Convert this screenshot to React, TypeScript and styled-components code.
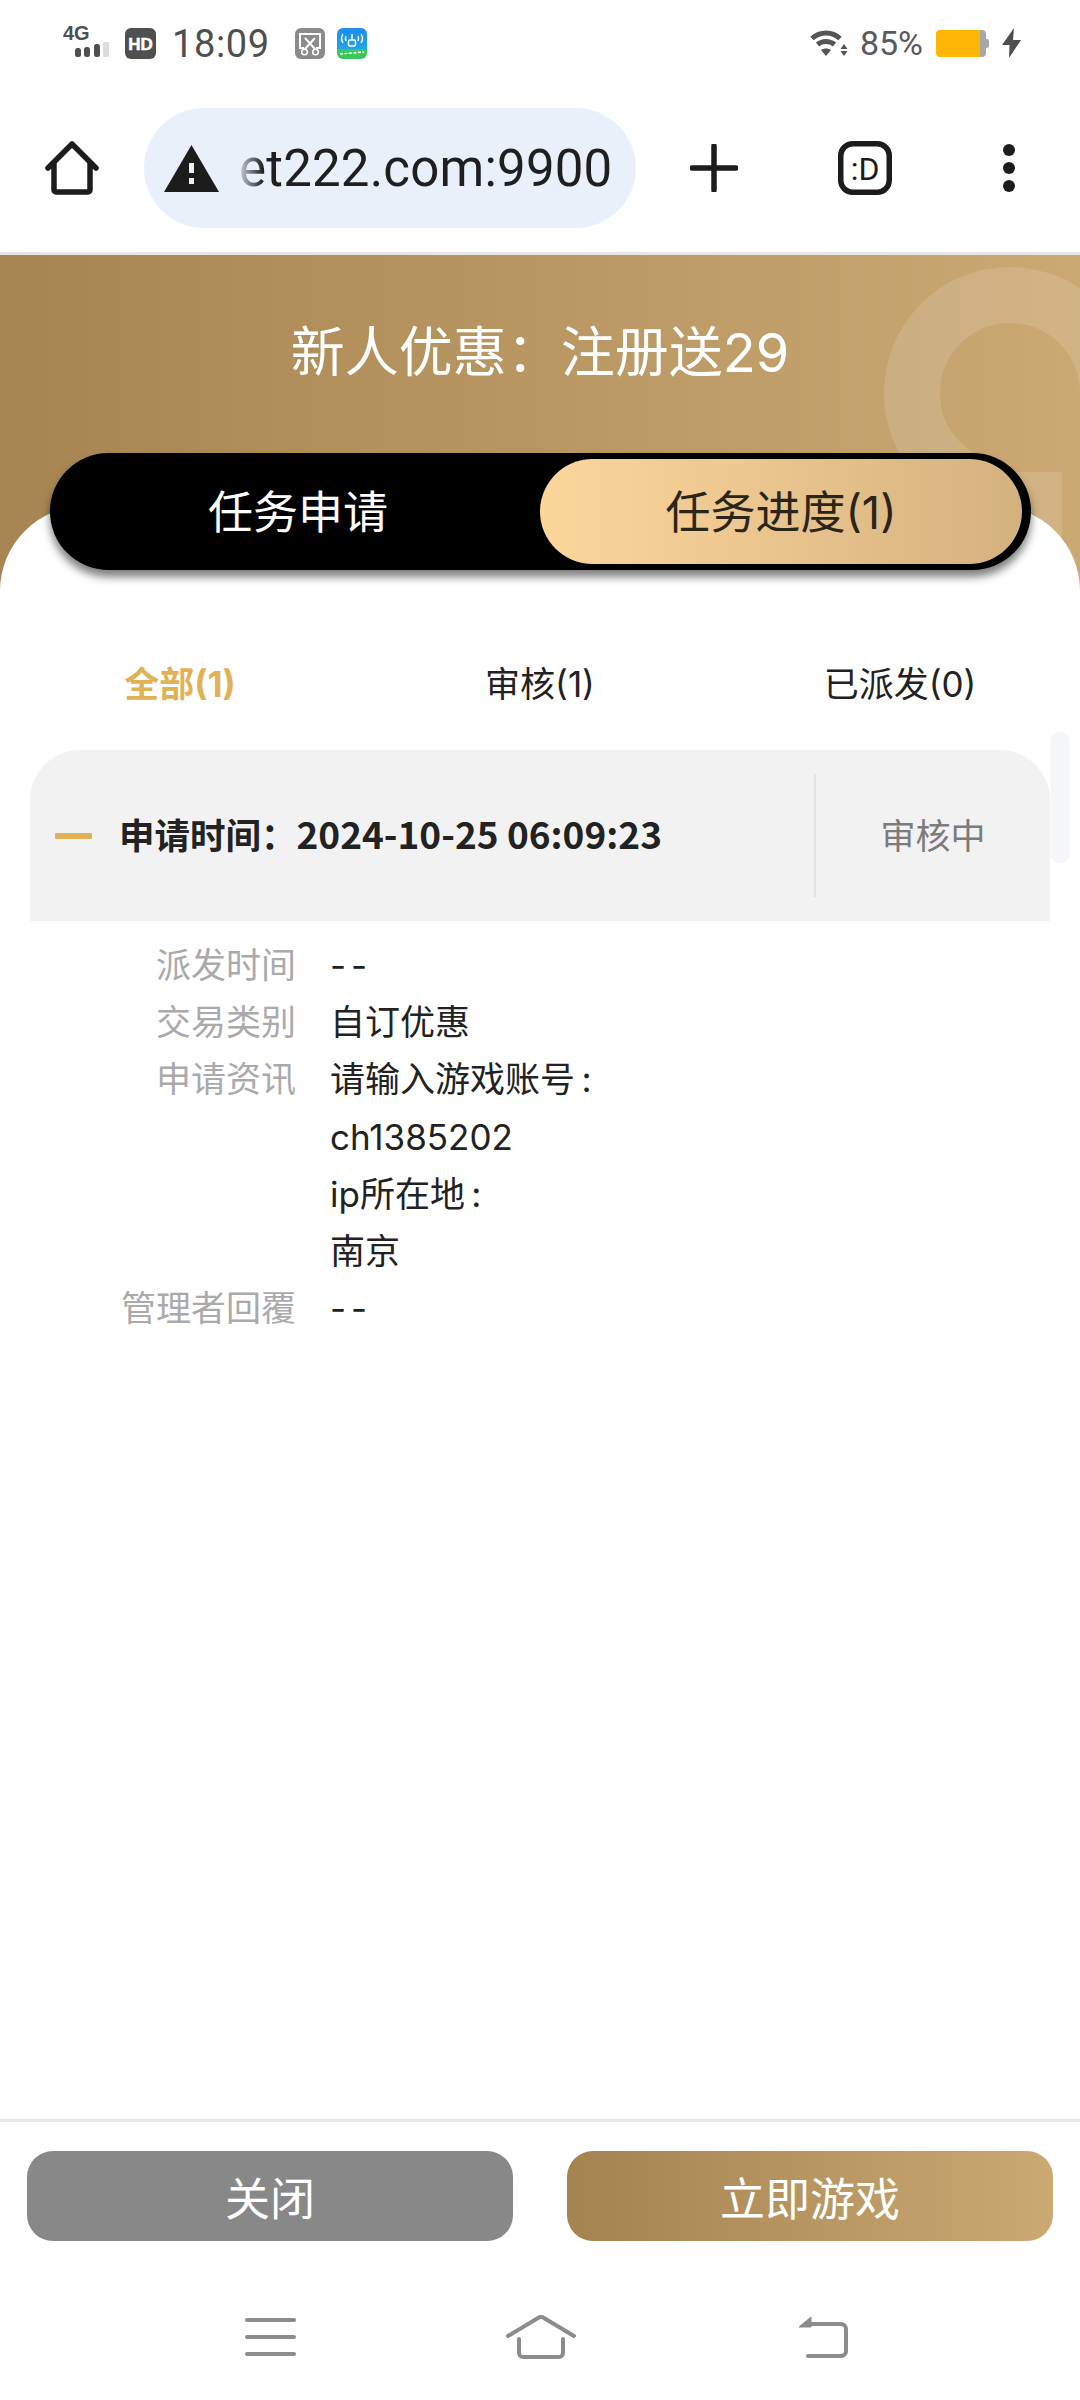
import React from "react";
import styled, { createGlobalStyle } from "styled-components";

const Global = createGlobalStyle`
  html, body { margin: 0; padding: 0; background: #fff; }
  * { box-sizing: border-box; }
  body { font-family: Roboto, "Noto Sans CJK SC", sans-serif; }
`;
const Page = styled.div`
  width: 1080px; height: 2400px; display: flex; flex-direction: column; overflow: hidden; background: #fff;
  font-family: Inter, "Noto Sans CJK SC", Roboto, sans-serif;
`;
const StatusBar = styled.div`
  height: 86px; flex: none; display: flex; align-items: center; justify-content: space-between; padding: 0 59px 0 63px;
  color: #555; font-family: Roboto, sans-serif;
`;
const StatusGroup = styled.div`display: flex; align-items: center;`;
const Time = styled.span`font-size: 38px; letter-spacing: 0.6px; margin: 2px 25px 0 16px; color: #4f4f4f;`;
const Percent = styled.span`font-size: 34px; margin: 0 13px 0 12px; color: #5a5a5a;`;
const Toolbar = styled.div`
  height: 169px; flex: none; display: flex; align-items: center; padding: 0 0 2px 45px; border-bottom: 3px solid #e6e6e6;
`;
const AddressPill = styled.div`
  width: 492px; height: 120px; margin-left: 45px; border-radius: 60px; background: #eaf0fa; display: flex; align-items: center;
  padding-left: 20px; overflow: hidden; flex: none;
`;
const Url = styled.span`
  font-family: Roboto, sans-serif; font-size: 51px; color: #1f1f1f; margin-left: 20px; white-space: nowrap; letter-spacing: 0.2px;
  -webkit-mask-image: linear-gradient(90deg, rgba(0,0,0,.15), #000 24px);
  mask-image: linear-gradient(90deg, rgba(0,0,0,.15), #000 24px);
`;
const ToolIcons = styled.div`display: flex; align-items: center; margin-left: 54px;`;
const Hero = styled.div`
  position: relative; height: 345px; flex: none; overflow: hidden; padding-top: 62px; text-align: center;
  background: linear-gradient(90deg, #a68552, #cba973);
`;
const HeroMark = styled.svg`
  position: absolute; left: 840px; top: 0; opacity: 0.13;
`;
const HeroTitle = styled.h1`
  position: relative; margin: 0; font-size: 54px; line-height: 72px; font-weight: 400; color: #fff;
`;
const Panel = styled.div`
  position: relative; flex: 1; margin-top: -94px; background: #fff; border-radius: 85px 85px 0 0; padding-top: 135px; display: flex; flex-direction: column;
`;
const Switch = styled.div`
  position: absolute; z-index: 2; left: 50px; top: -53px; width: 981px; height: 117px; border-radius: 59px; background: #000;
  box-shadow: 0 7px 8px rgba(0,0,0,.5); display: flex; align-items: center; padding-right: 9px;
`;
const SwitchItem = styled.div<{ $active?: boolean }>`
  height: 105px; border-radius: 53px; display: flex; align-items: center; justify-content: center;
  font-size: 45px; font-weight: 400; padding-bottom: 5px;
  padding-left: ${(p) => (p.$active ? 0 : 6)}px;
  color: ${(p) => (p.$active ? "#2b2418" : "#fff")};
  background: ${(p) => (p.$active ? "linear-gradient(90deg, #fdd69c, #d4b27e)" : "transparent")};
  flex: 0 0 ${(p) => (p.$active ? "482px" : "490px")};
`;
const SubTabs = styled.div`
  height: 80px; display: grid; grid-template-columns: repeat(3, 360px); align-items: center; justify-items: center; font-size: 35px; color: #222;
`;
const SubTab = styled.span<{ $active?: boolean }>`
  font-weight: ${(p) => (p.$active ? 700 : 400)};
  color: ${(p) => (p.$active ? "#e0b255" : "#222")};
`;
const List = styled.div`position: relative; padding: 0 30px; margin-top: 29px;`;
const ScrollThumb = styled.div`
  position: absolute; left: 1052px; top: -17px; width: 16px; height: 129px; border-radius: 8px; background: #f6f7fb; box-shadow: 0 0 3px rgba(0,0,0,.1);
`;
const CardHead = styled.div`
  height: 171px; background: #f2f2f2; border-radius: 50px 50px 0 0; display: flex; align-items: center; padding-left: 25px;
`;
const Dash = styled.span`width: 37px; height: 6px; background: #e0b255; border-radius: 1px; flex: none;`;
const CardTitle = styled.span`
  flex: 1; margin: 0 0 5px 27px; font-size: 35.5px; font-weight: 700; color: #222; white-space: nowrap;
  font-family: "Noto Sans CJK SC", sans-serif;
`;
const CardDate = styled.span`font-size: 37px;`;
const CardState = styled.div`
  width: 236px; height: 123px; border-left: 2px solid #e2e2e2; display: flex; align-items: center; justify-content: center;
  font-size: 35px; color: #7b7b7b; flex: none; padding-bottom: 4px;
`;
const Details = styled.div`
  display: grid; grid-template-columns: 296px 1fr; column-gap: 34px; font-size: 35px; line-height: 57.2px; padding-top: 16px; margin-left: -30px;
`;
const Label = styled.div`text-align: right; color: #aaa;`;
const Value = styled.div`color: #222;`;
const EmptyValue = styled(Value)`letter-spacing: 5px;`;
const Footer = styled.div`
  flex: none; height: 281px; border-top: 3px solid #e8e8e8; padding-top: 29px; background: #fff;
`;
const ButtonRow = styled.div`display: flex; padding: 0 27px; justify-content: space-between;`;
const Button = styled.div<{ $gold?: boolean }>`
  width: 486px; height: 90px; border-radius: 26px; display: flex; align-items: center; justify-content: center; color: #fff; font-size: 45px;
  background: ${(p) => (p.$gold ? "linear-gradient(90deg, #a38350, #cba973)" : "#888")};
`;
const NavBar = styled.div`
  display: flex; align-items: center; margin-top: 74px; padding-left: 245px;
`;

const Glyph = styled.svg<{ $mr?: number; $ml?: number }>`
  display: block; flex: none;
  margin-right: ${(p) => p.$mr ?? 0}px; margin-left: ${(p) => p.$ml ?? 0}px;
`;

const Signal = () => (
  <Glyph width="48" height="44" viewBox="0 -5 48 44" $mr={14}>
    <text x="0" y="14" fontFamily="Liberation Sans" fontWeight="700" fontSize="20" fill="#4f4f4f">4G</text>
    <rect x="12" y="22" width="6" height="9" rx="2.5" fill="#4f4f4f" />
    <rect x="21" y="21" width="6" height="10" rx="2.5" fill="#4f4f4f" />
    <rect x="31" y="18" width="6" height="13" rx="2.5" fill="#4f4f4f" />
    <rect x="40" y="16" width="6" height="15" rx="1" fill="#ddd" />
  </Glyph>
);
const Hd = () => (
  <Glyph width="31" height="31" viewBox="0 0 31 31">
    <rect width="31" height="31" rx="6" fill="#4f4f4f" />
    <text x="15.5" y="21.500" textAnchor="middle" fontFamily="Liberation Sans" fontWeight="700" fontSize="17" stroke="#fff" strokeWidth="0.5" fill="#fff">HD</text>
  </Glyph>
);
const Scissors = () => (
  <Glyph width="30" height="31" viewBox="0 0 30 31" $mr={12}>
    <rect width="30" height="31" rx="6" fill="#8b8b8b" />
    <path d="M9 20H5V6h20v14h-4" fill="none" stroke="#fff" strokeWidth="2" />
    <path d="M10 10l10 11M20 10L10 21" stroke="#fff" strokeWidth="2" />
    <circle cx="9.500" cy="24" r="2.800" fill="none" stroke="#fff" strokeWidth="1.600" />
    <circle cx="20.500" cy="24" r="2.800" fill="none" stroke="#fff" strokeWidth="1.600" />
  </Glyph>
);
const AppIcon = () => (
  <Glyph width="30" height="31" viewBox="0 0 30 31">
    <defs>
      <linearGradient id="appg" x1="0" y1="0" x2="0" y2="1">
        <stop offset="0" stopColor="#1c8cf0" />
        <stop offset="0.68" stopColor="#23a4e8" />
        <stop offset="0.7" stopColor="#3ecb58" />
        <stop offset="1" stopColor="#37c45c" />
      </linearGradient>
    </defs>
    <rect width="30" height="31" rx="6" fill="url(#appg)" />
    <path d="M6 6c-2 3-2 6 0 9M24 6c2 3 2 6 0 9M9 8c-1 2-1 3 0 5M21 8c1 2 1 3 0 5" fill="none" stroke="#fff" strokeWidth="1.300" />
    <path d="M15 6v6" stroke="#fff" strokeWidth="1.600" />
    <rect x="11.500" y="12" width="7" height="6" rx="1.500" fill="none" stroke="#fff" strokeWidth="1.500" />
    <path d="M3 26l24-2" stroke="#fff" strokeWidth="1.500" strokeDasharray="3 1.500" />
  </Glyph>
);
const Wifi = () => (
  <Glyph width="38" height="28" viewBox="0 0 38 28">
    <path d="M2 9.500C10 2 22 2 30 9.500" fill="none" stroke="#555" strokeWidth="5" />
    <path d="M7.500 15.500C12.500 11.500 19.500 11.500 24.500 15.500" fill="none" stroke="#555" strokeWidth="5" />
    <path d="M11 21c3-2 7-2 10 0l-5 6z" fill="#555" />
    <path d="M34 15l3.500 5h-7zM34 27l-3.500-5h7z" fill="#555" />
  </Glyph>
);
const Battery = () => (
  <Glyph width="53" height="27" viewBox="0 0 53 27" $mr={13}>
    <path d="M44 0h2a4 4 0 0 1 4 4v19a4 4 0 0 1-4 4h-2z" fill="#a8a8a8" />
    <path d="M50 9h1a2 2 0 0 1 2 2v5a2 2 0 0 1-2 2h-1z" fill="#a8a8a8" />
    <path d="M4 0h40v27H4a4 4 0 0 1-4-4V4a4 4 0 0 1 4-4z" fill="#ffb606" />
  </Glyph>
);
const Bolt = () => (
  <Glyph width="19" height="30" viewBox="0 0 19 30">
    <path d="M12 0L0 17h7.500L7 30 19 12h-8z" fill="#4f4f4f" />
  </Glyph>
);
const HomeIcon = () => (
  <Glyph width="54" height="54" viewBox="0 0 54 54">
    <path d="M3 27L27 3l24 24M9 22v27a2 2 0 0 0 2 2h32a2 2 0 0 0 2-2V22" fill="none" stroke="#1c1c1c" strokeWidth="5.500" strokeLinecap="round" strokeLinejoin="round" />
  </Glyph>
);
const Warning = () => (
  <Glyph width="55" height="47" viewBox="0 0 55 47">
    <path d="M27.500 0L55 47H0z" fill="#1c1c1c" />
    <rect x="25" y="18" width="5" height="10" fill="#eaf0fa" />
    <rect x="25" y="33" width="5" height="6" fill="#eaf0fa" />
  </Glyph>
);
const Plus = () => (
  <Glyph width="48" height="48" viewBox="0 0 48 48" $mr={100}>
    <path d="M24 2v44M2 24h44" stroke="#1c1c1c" strokeWidth="5.500" strokeLinecap="round" />
  </Glyph>
);
const DBox = () => (
  <Glyph width="54" height="54" viewBox="0 0 54 54" $mr={111}>
    <rect x="2.750" y="2.750" width="48.500" height="48.500" rx="12" fill="none" stroke="#1c1c1c" strokeWidth="5.500" />
    <text x="27" y="38.500" textAnchor="middle" fontFamily="Roboto" fontSize="32" fill="#1c1c1c">:D</text>
  </Glyph>
);
const Dots = () => (
  <Glyph width="12" height="48" viewBox="0 0 12 48">
    <circle cx="6" cy="6" r="6" fill="#1c1c1c" />
    <circle cx="6" cy="24" r="6" fill="#1c1c1c" />
    <circle cx="6" cy="42" r="6" fill="#1c1c1c" />
  </Glyph>
);
const NavMenu = () => (
  <Glyph width="51" height="42" viewBox="0 0 51 42" $mr={210}>
    <path d="M2 4h47M2 21h47M2 38h47" stroke="#8c8c8c" strokeWidth="4" strokeLinecap="round" />
  </Glyph>
);
const NavHome = () => (
  <Glyph width="70" height="44" viewBox="0 0 70 44" $mr={222}>
    <path d="M2 21L32 3a5 5 0 0 1 6 0L68 21" fill="none" stroke="#8c8c8c" strokeWidth="4" strokeLinecap="round" />
    <path d="M13 24v14a4 4 0 0 0 4 4h36a4 4 0 0 0 4-4V24" fill="none" stroke="#8c8c8c" strokeWidth="4" strokeLinecap="round" />
  </Glyph>
);
const NavBack = () => (
  <Glyph width="51" height="43" viewBox="0 0 51 43">
    <path d="M1 11L13 1v10z" fill="#8c8c8c" stroke="#8c8c8c" strokeWidth="1" strokeLinejoin="round" />
    <path d="M13 8h30a5 5 0 0 1 5 5v22a5 5 0 0 1-5 5H10" fill="none" stroke="#8c8c8c" strokeWidth="4" strokeLinecap="round" />
  </Glyph>
);

export default function App() {
  return (
    <Page>
      <Global />
      <StatusBar>
        <StatusGroup>
          <Signal />
          <Hd />
          <Time>18:09</Time>
          <Scissors />
          <AppIcon />
        </StatusGroup>
        <StatusGroup>
          <Wifi />
          <Percent>85%</Percent>
          <Battery />
          <Bolt />
        </StatusGroup>
      </StatusBar>
      <Toolbar>
        <HomeIcon />
        <AddressPill>
          <Warning />
          <Url>et222.com:9900</Url>
        </AddressPill>
        <ToolIcons>
          <Plus />
          <DBox />
          <Dots />
        </ToolIcons>
      </Toolbar>
      <Hero>
        <HeroMark width="240" height="345" viewBox="0 0 240 345">
          <path d="M268 138A98 98 0 1 0 170 236" fill="none" stroke="#fff" strokeWidth="56" />
          <path d="M170 217h52v128h-52z" fill="#fff" />
        </HeroMark>
        <HeroTitle>新人优惠：注册送29</HeroTitle>
      </Hero>
      <Panel>
        <Switch>
          <SwitchItem>任务申请</SwitchItem>
          <SwitchItem $active>任务进度(1)</SwitchItem>
        </Switch>
        <SubTabs>
          <SubTab $active>全部(1)</SubTab>
          <SubTab>审核(1)</SubTab>
          <SubTab>已派发(0)</SubTab>
        </SubTabs>
        <List>
          <ScrollThumb />
          <CardHead>
            <Dash />
            <CardTitle>
              申请时间：<CardDate>2024-10-25 06:09:23</CardDate>
            </CardTitle>
            <CardState>审核中</CardState>
          </CardHead>
          <Details>
            <Label>派发时间</Label>
            <EmptyValue>--</EmptyValue>
            <Label>交易类别</Label>
            <Value>自订优惠</Value>
            <Label>申请资讯</Label>
            <Value>
              请输入游戏账号{"\u2009"}:
              <br />
              ch1385202
              <br />
              ip所在地{"\u2009"}:
              <br />
              南京
            </Value>
            <Label>管理者回覆</Label>
            <EmptyValue>--</EmptyValue>
          </Details>
        </List>
      </Panel>
      <Footer>
        <ButtonRow>
          <Button>关闭</Button>
          <Button $gold>立即游戏</Button>
        </ButtonRow>
        <NavBar>
          <NavMenu />
          <NavHome />
          <NavBack />
        </NavBar>
      </Footer>
    </Page>
  );
}
